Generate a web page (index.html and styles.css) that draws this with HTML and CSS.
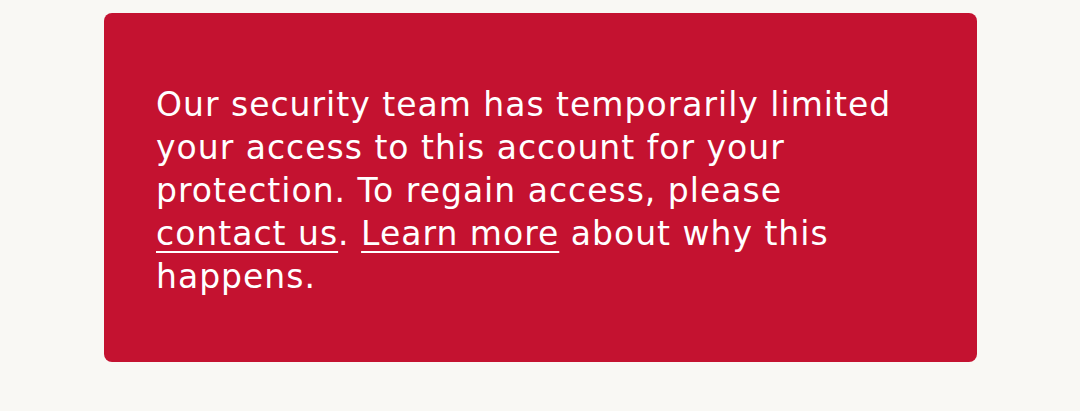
FILE: index.html
```html
<!DOCTYPE html>
<html lang="en">
<head>
<meta charset="utf-8">
<link rel="stylesheet" href="styles.css">
<title>Notice</title>
</head>
<body>
<main class="page">
  <div class="notice">
    <p class="notice-text">Our security team has temporarily limited your access to this account for your protection. To regain access, please <a class="link" href="#">contact us</a>. <a class="link" href="#">Learn more</a> about why this happens.</p>
  </div>
</main>
</body>
</html>
```
FILE: styles.css
```css
html, body {
  margin: 0;
  padding: 0;
  background: #f9f8f4;
}
.page {
  padding: 13px 104px 0 104px;
}
.notice {
  width: 873px;
  box-sizing: border-box;
  background: #c41230;
  border-radius: 8px;
  padding: 70px 72px 64px 52px;
}
.notice-text {
  margin: 0;
  color: #ffffff;
  font-family: "DejaVu Sans", sans-serif;
  font-size: 33px;
  line-height: 43px;
  letter-spacing: 1px;
}
.link {
  color: #ffffff;
  text-decoration: underline;
  text-decoration-thickness: 2px;
  text-underline-offset: 6px;
}
```
